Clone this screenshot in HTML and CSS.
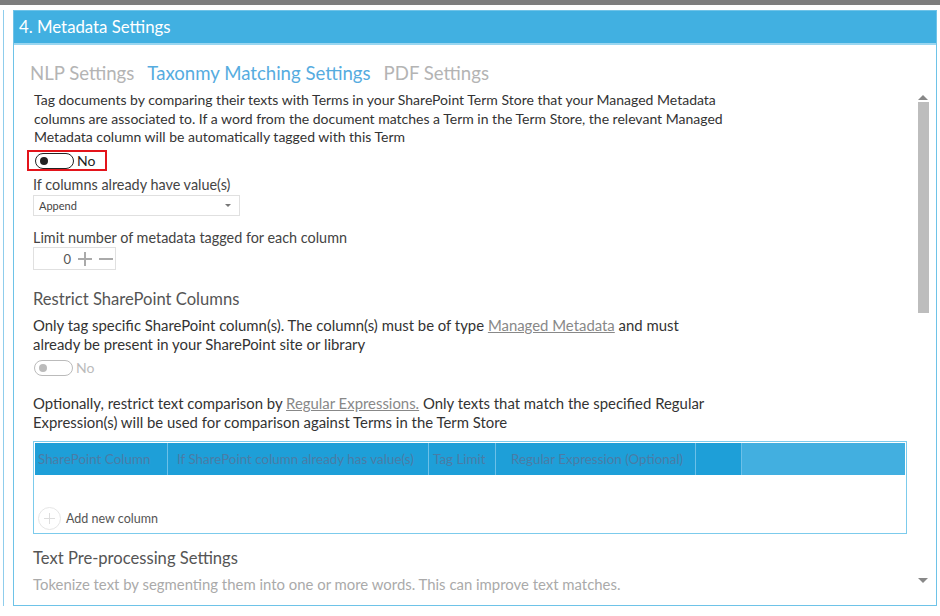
FILE: index.html
```html
<!DOCTYPE html>
<html lang="en">
<head>
  <meta charset="UTF-8" />
  <title>Metadata Settings</title>
  <link rel="stylesheet" href="styles.css">
</head>
<body>

  <div class="topbar"></div>

  <div class="layout">
    <div class="side"></div>

    <div class="panel">
      <div class="panel-head">4. Metadata Settings</div>

      <div class="panel-body">
        <div class="content">

          <nav class="tabs">
            <a href="#">NLP Settings</a>
            <a href="#" class="active">Taxonmy Matching Settings</a>
            <a href="#">PDF Settings</a>
          </nav>

          <p class="intro">Tag documents by comparing their texts with Terms in your SharePoint Term Store that your Managed Metadata<br>columns are associated to. If a word from the document matches a Term in the Term Store, the relevant Managed<br>Metadata column will be automatically tagged with this Term</p>

          <div class="highlight">
            <span class="toggle"><span class="knob"></span></span>
            <span class="toggle-label">No</span>
          </div>

          <div class="field">
            <label>If columns already have value(s)</label>
            <div class="select">Append <span class="caret"></span></div>
          </div>

          <div class="field second">
            <label>Limit number of metadata tagged for each column</label>
            <div class="spinner">
              <span class="num">0</span>
              <span class="plus"></span>
              <span class="minus"></span>
            </div>
          </div>

          <h3>Restrict SharePoint Columns</h3>
          <p class="desc">Only tag specific SharePoint column(s). The column(s) must be of type <a href="#">Managed Metadata</a> and must<br>already be present in your SharePoint site or library</p>
          <div class="switch disabled">
            <span class="toggle"><span class="knob"></span></span>
            <span class="toggle-label">No</span>
          </div>

          <p class="desc optional">Optionally, restrict text comparison by <a href="#">Regular Expressions.</a> Only texts that match the specified Regular<br>Expression(s) will be used for comparison against Terms in the Term Store</p>

          <div class="grid">
            <div class="grid-head">
              <div class="col c1">SharePoint Column</div>
              <div class="col c2">If SharePoint column already has value(s)</div>
              <div class="col c3">Tag Limit</div>
              <div class="col c4">Regular Expression (Optional)</div>
              <div class="col c5"></div>
              <div class="col fill"></div>
            </div>
            <div class="grid-body">
              <a href="#" class="add"><span class="add-icon"></span>Add new column</a>
            </div>
          </div>

          <h3 class="pre">Text Pre-processing Settings</h3>
          <p class="muted">Tokenize text by segmenting them into one or more words. This can improve text matches.</p>

        </div>

        <div class="scrollbar">
          <span class="arrow up"></span>
          <span class="thumb"></span>
          <span class="arrow down"></span>
        </div>
      </div>
    </div>
  </div>

</body>
</html>
```

FILE: styles.css
```css
* { margin:0; padding:0; box-sizing:border-box; }
body { background:#fff; color:#333; font-family:"Lato", "Noto Sans", sans-serif; width:940px; height:616px; overflow:hidden; }
a { text-decoration:none; }

.topbar { height:5px; background:#7d7d7d; }
.layout { display:flex; padding-top:5px; height:611px; }
.side { width:4px; height:596px; border-right:1px solid #8fcdec; }
.panel { margin-left:9px; width:924px; height:596px; border:1px solid #6ec3e8; display:flex; flex-direction:column; overflow:hidden; }

.panel-head { height:34px; background:#41b0e1; border-bottom:2px solid #9ad6f0; color:#fff; font-size:16.8px; line-height:32px; padding-left:5px; }

.panel-body { flex:1; display:flex; overflow:hidden; }
.content { flex:1; padding-left:19px; overflow:hidden; }

.tabs { display:flex; gap:13px; margin:16px 0 0 -3px; height:24px; }
.tabs a { font-size:18.6px; line-height:24px; color:#b4b4b4; }
.tabs a.active { color:#56acdf; }

.intro { font-size:14px; line-height:18.5px; color:#333; margin-top:6px; padding-left:1px; }

.highlight { display:flex; align-items:center; border:2px solid #e3141b; height:21px; width:80px; margin:3.5px 0 0 -6px; padding-left:6px; }
.toggle { display:inline-block; width:39px; height:16px; border:1.5px solid #222; border-radius:8px; position:relative; }
.knob { position:absolute; left:4px; top:3px; width:8px; height:8px; border-radius:50%; background:#222; }
.toggle-label { font-size:14px; margin-left:3px; color:#222; }

.field { margin-top:4px; }
.field.second { margin-top:12px; }
.field label { display:block; font-size:14.4px; line-height:19px; color:#444; }
.select { width:207px; height:21px; border:1px solid #e0e0e0; font-size:11px; line-height:19px; padding-left:5px; color:#444; position:relative; margin-top:1px; }
.caret { position:absolute; right:8px; top:8px; border-left:3px solid transparent; border-right:3px solid transparent; border-top:3px solid #777; }

.spinner { display:flex; align-items:center; width:83px; height:23px; border:1px solid #e0e0e0; }
.num { width:37px; text-align:right; font-size:13px; color:#555; }
.plus, .minus { position:relative; width:14px; height:14px; margin-left:7px; }
.plus::before, .minus::before { content:""; position:absolute; left:0; top:6px; width:14px; height:2px; background:#aaa; }
.plus::after { content:""; position:absolute; left:6px; top:0; width:2px; height:14px; background:#aaa; }

h3 { font-weight:normal; font-size:16.6px; line-height:22px; color:#555; margin-top:18px; }
.desc { font-size:14.9px; line-height:19px; color:#333; margin-top:5.5px; }
.desc a { color:#888; text-decoration:underline; }

.switch { display:flex; align-items:center; margin-top:5.5px; height:17px; padding-left:1px; }
.switch.disabled .toggle { border-color:#bbb; }
.switch.disabled .knob { background:#bbb; }
.switch.disabled .toggle-label { color:#bbb; }

.optional { margin-top:17.5px; }

.grid { width:874px; height:93px; border:1px solid #7ccbec; margin-top:9.5px; padding:1px; display:flex; flex-direction:column; }
.grid-head { display:flex; height:32px; background:#1e9fd8; }
.col { font-size:13.4px; line-height:32px; color:#4a7ca6; padding-left:3px; border-right:1px solid #6cc0e8; white-space:nowrap; overflow:hidden; }
.c1 { width:133px; }
.c2 { width:261px; padding-left:9px; }
.c3 { width:67px; padding-left:4px; }
.c4 { width:200px; padding-left:15px; }
.c5 { width:46px; }
.fill { flex:1; background:#42afe0; border-right:none; }
.grid-body { flex:1; display:flex; align-items:flex-end; padding:0 0 2px 3px; }
.add { display:flex; align-items:center; font-size:12.5px; color:#555; }
.add-icon { width:23px; height:23px; border:1px solid #e6e6e6; border-radius:50%; margin-right:5px; position:relative; }
.add-icon::before { content:""; position:absolute; left:5px; top:10px; width:11px; height:1px; background:#ddd; }
.add-icon::after { content:""; position:absolute; left:10px; top:5px; width:1px; height:11px; background:#ddd; }

.pre { margin-top:13px; }
.muted { font-size:14.9px; line-height:20px; color:#aaa; margin-top:5px; }

.scrollbar { width:24px; display:flex; flex-direction:column; align-items:center; padding-top:50px; margin-right:1px; }
.arrow { border-left:5px solid transparent; border-right:5px solid transparent; }
.arrow.up { border-bottom:5px solid #888; }
.arrow.down { border-top:5px solid #888; margin-top:265px; }
.thumb { width:11px; height:211px; background:#bdbdbd; margin-top:2px; }
```
